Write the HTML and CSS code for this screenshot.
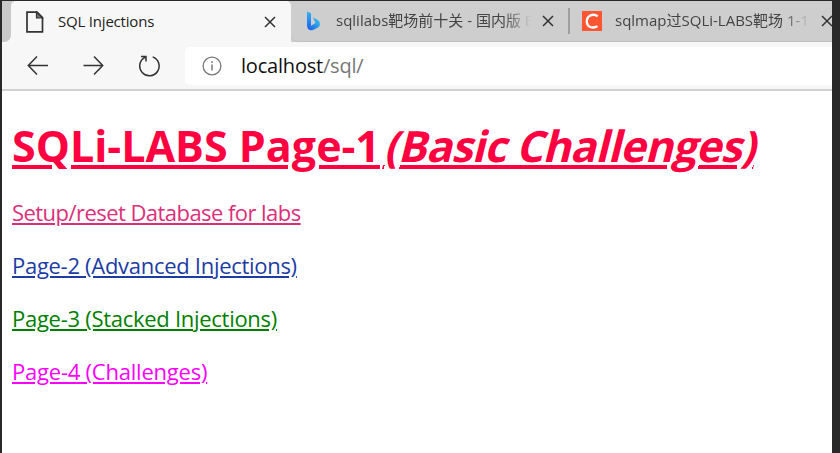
FILE: index.html
```html
<!DOCTYPE html>
<html lang="en">
<head>
<meta charset="utf-8">
<title>SQL Injections</title>
<link rel="stylesheet" href="styles.css">
</head>
<body>
<div class="window">
  <div class="tabs">
    <div class="edge"></div>
    <div class="tab active">
      <svg class="doc" width="20" height="22" viewBox="0 0 20 22"><path d="M2 1.200h10l5.500 5.500V20.800H2z" fill="none" stroke="#333" stroke-width="1.700"/><path d="M11.500 1v6h6z" fill="#777" stroke="#333" stroke-width="1.200"/></svg>
      <span class="title t1">SQL Injections</span>
      <svg class="close" width="12" height="12" viewBox="0 0 12 12"><path d="M1 1l10 10M11 1L1 11"/></svg>
    </div>
    <div class="rest">
      <div class="tab second">
        <svg class="bing" width="15" height="20" viewBox="0 0 15 20">
          <defs>
            <linearGradient id="b1" x1="0" y1="0" x2="0" y2="1"><stop offset="0" stop-color="#35b4f5"/><stop offset="1" stop-color="#1b62f0"/></linearGradient>
            <linearGradient id="b2" x1="0" y1="1" x2="1" y2="0"><stop offset="0" stop-color="#1a56e8"/><stop offset="1" stop-color="#38d0ea"/></linearGradient>
          </defs>
          <path d="M1 .5l3 1.200q1 .4 1 1.500V15l-2 3Q1 17 1 15z" fill="url(#b1)"/>
          <path d="M7 6.500l4.500 2.200Q14 10 14 13q0 2-1.500 3.300L7 19q-4 1.300-5.500-2L9.500 12z" fill="url(#b2)"/>
        </svg>
        <span class="title t2">sqlilabs靶场前十关 - 国内版 B</span>
        <svg class="close" width="12" height="12" viewBox="0 0 12 12"><path d="M1 1l10 10M11 1L1 11"/></svg>
      </div>
      <div class="divider"></div>
      <div class="tab third">
        <svg class="csdn" width="20" height="20" viewBox="0 0 20 20"><path d="M0 0h20v20H0z" fill="#fc5531"/><path d="M15.800 5.200C10.500 1.800 4.800 5 4.800 10.300c0 6 5.700 7.500 10.700 5" fill="none" stroke="#fff" stroke-width="2.300"/></svg>
        <span class="title t3">sqlmap过SQLi-LABS靶场 1-10</span>
        <svg class="close" width="12" height="12" viewBox="0 0 12 12"><path d="M1 1l10 10M11 1L1 11"/></svg>
      </div>
    </div>
  </div>
  <div class="toolbar">
    <svg class="nav" width="22" height="20" viewBox="0 0 22 20"><path d="M21 9.500H1.500M10 .5L1.300 9.500 10 18.500"/></svg>
    <svg class="nav" width="22" height="20" viewBox="0 0 22 20"><path d="M.5 9.500H20M11 .5l8.700 9-8.700 9"/></svg>
    <svg class="nav" width="22" height="22" viewBox="0 0 22 22"><path d="M13.700 1.900A9.700 9.700 0 1 1 6 2.400M2 1.500h5V6.500"/></svg>
    <div class="address">
      <svg class="info" width="20" height="20" viewBox="0 0 20 20"><circle cx="10" cy="10" r="8.900" fill="none" stroke="#777" stroke-width="1.300"/><path d="M10 8.500v6M10 5.300v1.700" stroke="#777" stroke-width="1.500"/></svg>
      <span class="url">localhost<span class="path">/sql/</span></span>
    </div>
  </div>
  <main>
    <h1><span class="plain">SQLi-LABS Page-1</span><em>(Basic Challenges)</em></h1>
    <p><a class="setup" href="#">Setup/reset Database for labs</a></p>
    <p><a class="p2" href="#">Page-2 (Advanced Injections)</a></p>
    <p><a class="p3" href="#">Page-3 (Stacked Injections)</a></p>
    <p><a class="p4" href="#">Page-4 (Challenges)</a></p>
  </main>
</div>
</body>
</html>
```
FILE: styles.css
```css
* { box-sizing: border-box; }
body {
  margin: 0;
  height: 453px;
  padding: 1px 8px 0 2px;
  background: #292929;
  overflow: hidden;
  font-family: "Open Sans", "Noto Sans CJK SC", sans-serif;
}
.window { height: 452px; background: #fff; overflow: hidden; }
.tabs { display: flex; height: 41px; background: #cecece; }
.edge { width: 9px; background: #c9c9c9; border-radius: 0 0 7px 0; box-shadow: 0 7px 0 #f7f7f7; }
.tab { display: flex; align-items: center; flex: none; }
.tabs > .active { width: 280px; padding: 0 15px 0 14px; background: #f7f7f7; border-radius: 5px 5px 0 0; }
.rest {
  display: flex; align-items: center; flex: 1; min-width: 0; overflow: hidden;
  background: #cecece; border-bottom: 1px solid #bfbfbf; border-radius: 0 0 0 7px;
}
.second { width: 277px; padding-left: 15px; }
.third { width: 264px; padding-left: 12px; }
.divider { flex: none; width: 2px; height: 26px; background: #9f9f9f; }
.title { white-space: nowrap; overflow: hidden; font-size: 15px; line-height: 24px; color: #222; padding-bottom: 2px; }
.active .title { margin-left: 13px; }
.t1 { flex: 1; letter-spacing: -0.2px; }
.t2, .t3 { color: #444; width: 195px; -webkit-mask-image: linear-gradient(90deg, #000 86%, transparent); mask-image: linear-gradient(90deg, #000 86%, transparent); }
.t2 { margin: 0 11px 0 15px; }
.t3 { margin: 0 11px 0 13px; }
.close { flex: none; stroke: #333; stroke-width: 1.5; fill: none; }
.toolbar {
  display: flex; align-items: center; height: 49px; padding-left: 25px; gap: 34px;
  background: #f7f7f7; border-bottom: 2px solid #d2d2d2;
}
.nav { flex: none; fill: none; stroke: #333; stroke-width: 1.5; }
.address {
  display: flex; align-items: center; flex: 1; height: 38px; margin-left: -10px; padding-left: 17px;
  background: #fff; border-radius: 5px 0 0 5px;
}
.url { margin-left: 19px; font-size: 20px; line-height: 30px; color: #111; letter-spacing: -0.2px; }
.path { color: #777; }
main { padding: 25px 10px 0; }
h1 {
  display: flex; margin: 0; font-size: 43px; line-height: 60px; font-weight: 700; color: #ff0040; white-space: nowrap;
}
.plain, em { text-decoration: underline; text-decoration-thickness: 4px; text-underline-offset: 3px; }
/* slanted upright letterforms */
em { display: block; margin-left: 4px; font-style: normal; letter-spacing: -0.75px; transform: skewX(-14deg); transform-origin: 0 75%; }
p { margin: 0; height: 53px; white-space: nowrap; font-size: 22px; line-height: 30px; }
h1 + p { margin-top: 21px; }
a { text-decoration-thickness: 2px; text-underline-offset: 2px; }
.setup { color: #dc2f79; letter-spacing: -0.55px; }
.p2 { color: #1c3ca5; letter-spacing: -0.29px; }
.p3 { color: #008000; letter-spacing: -0.28px; }
.p4 { color: #f0f; letter-spacing: -0.22px; }
```
